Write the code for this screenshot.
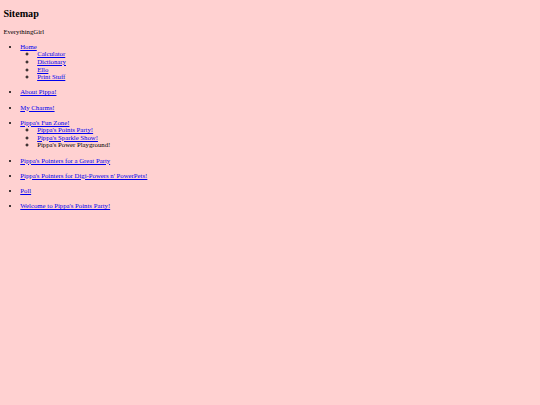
import React from 'react';

const sections = [
  {
    label: 'Home',
    children: [
      { label: 'Calculator' },
      { label: 'Dictionary' },
      { label: 'Ello' },
      { label: 'Print Stuff' },
    ],
  },
  { label: 'About Pippa!' },
  { label: 'My Charms!' },
  {
    label: "Pippa's Fun Zone!",
    children: [
      { label: "Pippa's Points Party!" },
      { label: "Pippa's Sparkle Show!" },
      { label: "Pippa's Power Playground!", plain: true },
    ],
  },
  { label: "Pippa's Pointers for a Great Party" },
  { label: "Pippa's Pointers for Digi-Powers n' PowerPets!" },
  { label: 'Poll' },
  { label: "Welcome to Pippa's Points Party!" },
];

const Item = ({ item }) =>
  item.plain ? (
    <span className="text-black">{item.label}</span>
  ) : (
    <a href="#" className="text-[#0000ee] underline">
      {item.label}
    </a>
  );

const App = () => {
  return (
    <div
      className="min-h-screen bg-[#ffd1d1] px-[3.375px] pt-[8.4px] text-black text-[6.75px] leading-[7.6px]"
      style={{ fontFamily: '"Liberation Serif", "Times New Roman", serif' }}
    >
      <h2 className="text-[10.125px] font-bold leading-[11.64px]">Sitemap</h2>
      <p className="mt-[8.4px]">EverythingGirl</p>
      <ul className="mt-[6.75px] pl-[16.875px] list-disc">
        {sections.map((s) => (
          <li key={s.label} className="mb-[7.6px]">
            <Item item={s} />
            {s.children && (
              <ul className="pl-[16.875px] list-[circle]">
                {s.children.map((c) => (
                  <li key={c.label}>
                    <Item item={c} />
                  </li>
                ))}
              </ul>
            )}
          </li>
        ))}
      </ul>
    </div>
  );
};

export default App;
